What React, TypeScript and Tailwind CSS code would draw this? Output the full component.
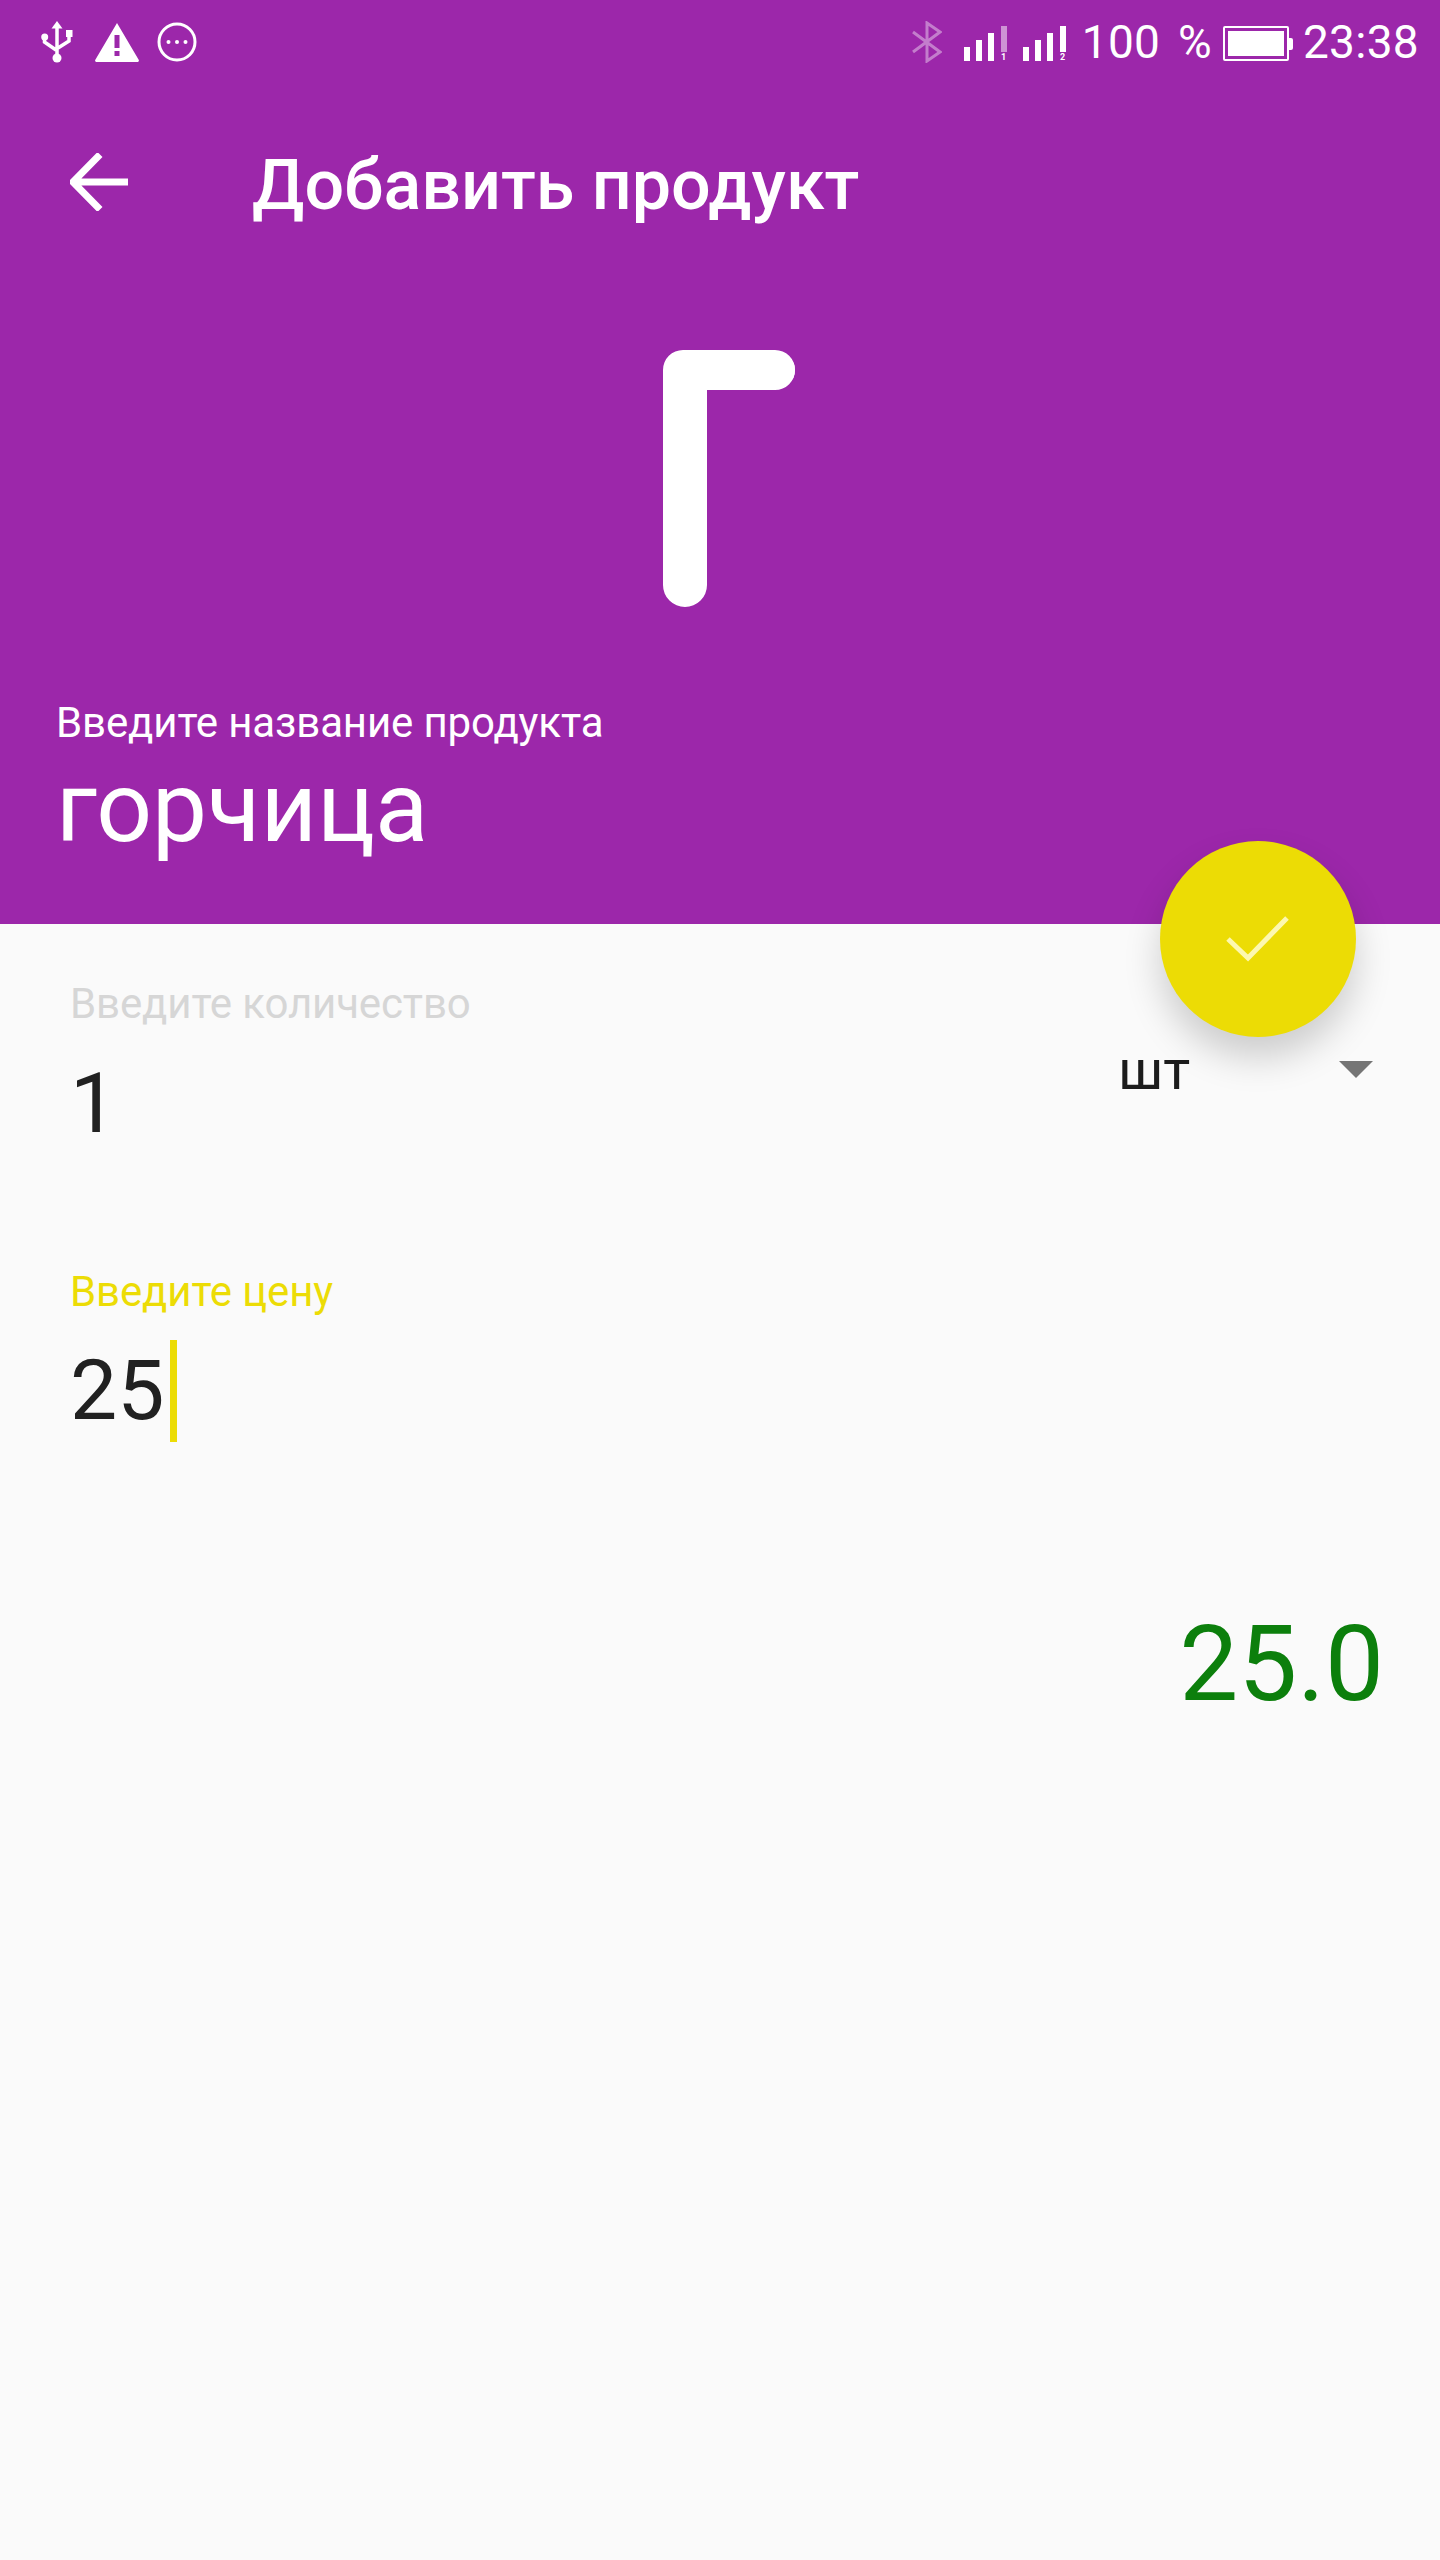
import React from 'react';

function UsbIcon() {
  return (
    <svg width="32" height="42" viewBox="0 0 32 42" fill="white">
      <path d="M16 0l5.500 7.500h-11z" />
      <path d="M16 6v31M3.500 16v5L15 29M28 14v6l-11 7" fill="none" stroke="white" strokeWidth="3.500" />
      <circle cx="16" cy="37" r="4.500" />
      <circle cx="3.700" cy="16" r="3.500" />
      <rect x="25" y="9" width="6.500" height="7" />
    </svg>
  );
}

function WarnIcon() {
  return (
    <svg width="44" height="39" viewBox="0 0 44 39">
      <path d="M22 0L43.500 36.500a1.500 1.500 0 0 1-1.300 2.500H1.800a1.500 1.500 0 0 1-1.300-2.500z" fill="white" />
      <rect x="19.500" y="12" width="5" height="13" fill="#9c27aa" />
      <rect x="19.500" y="28" width="5" height="5" fill="#9c27aa" />
    </svg>
  );
}

function MoreIcon() {
  return (
    <svg width="40" height="40" viewBox="0 0 40 40">
      <circle cx="20" cy="20" r="18" fill="none" stroke="white" strokeWidth="3" />
      <circle cx="11.500" cy="20" r="2" fill="white" />
      <circle cx="20" cy="20" r="2" fill="white" />
      <circle cx="28.500" cy="20" r="2" fill="white" />
    </svg>
  );
}

function BluetoothIcon() {
  return (
    <svg width="30" height="42" viewBox="0 0 30 42" fill="none" stroke="white" strokeOpacity="0.4" strokeWidth="3">
      <path d="M1 11l27 20-13 9V2l13 9L1 31" />
    </svg>
  );
}

// sim signal bars, the tall bar is dimmed when that sim has no data
function SignalIcon({ sim, dim }: { sim: string; dim?: boolean }) {
  return (
    <div className="relative flex h-[35px] w-[43px] items-end gap-[6px]">
      <div className="h-[14px] w-[6px] bg-white" />
      <div className="h-[21px] w-[6px] bg-white" />
      <div className="h-[28px] w-[6px] bg-white" />
      <div className={`absolute right-0 top-0 h-[26px] w-[6px] ${dim ? 'bg-white/50' : 'bg-white'}`} />
      <span className="absolute bottom-[-1px] right-0 w-[6px] text-center text-[9px] leading-[9px] font-bold text-white">{sim}</span>
    </div>
  );
}

function BatteryIcon() {
  return (
    <div className="flex items-center">
      <div className="h-[35px] w-[66px] rounded-[2px] border-[2px] border-white p-[3px]">
        <div className="h-full w-full bg-white" />
      </div>
      <div className="h-[12px] w-[4px] rounded-r-[2px] bg-white" />
    </div>
  );
}

function StatusBar() {
  return (
    <div className="flex h-[84px] items-start pl-[41px] pr-[21px] pt-[21px]">
      <UsbIcon />
      <div className="ml-[22px] mt-[2px]"><WarnIcon /></div>
      <div className="ml-[18px] mt-[1px]"><MoreIcon /></div>
      <div className="ml-auto flex items-center text-[46px] leading-[42px] font-normal tracking-[0.3px] text-white">
        <BluetoothIcon />
        <div className="ml-[22px] mt-[3px]"><SignalIcon sim="1" dim /></div>
        <div className="ml-[16px] mt-[3px]"><SignalIcon sim="2" /></div>
        <span className="ml-[16px] [word-spacing:6px]">100 %</span>
        <div className="ml-[11px] mt-[3px]"><BatteryIcon /></div>
        <span className="ml-[10px]">23:38</span>
      </div>
    </div>
  );
}

// first letter of the product, rounded ends come from the clip
function Monogram() {
  return (
    <svg width="240" height="418" viewBox="0 0 240 418" className="mt-[43px]">
      <defs>
        <clipPath id="letter-clip">
          <rect x="63" y="73" width="132" height="40" rx="20" />
          <rect x="63" y="73" width="44" height="257" rx="22" />
        </clipPath>
      </defs>
      <text x="45" y="320" fill="white" stroke="white" strokeWidth="28" strokeLinejoin="round" fontFamily="Roboto" fontWeight="300" fontSize="330" clipPath="url(#letter-clip)">Г</text>
    </svg>
  );
}

export default function App() {
  return (
    <div className="relative h-[2560px] w-[1440px] bg-[#fafafa] font-['Roboto',sans-serif]">
      <div className="h-[924px] bg-[#9c27aa]">
        <StatusBar />
        <div className="flex h-[150px] items-center pl-[70px] pt-[52px]">
          <svg width="58" height="58" viewBox="0 0 58 58" fill="none" stroke="white" strokeWidth="7" className="mt-[-6px]">
            <path d="M58 29H4M30 1.500L3 29l27 27.500" />
          </svg>
          <h1 className="ml-[124px] text-[70px] leading-[98px] font-medium text-white">Добавить продукт</h1>
        </div>
        <div className="flex h-[461px] items-start justify-center">
          <Monogram />
        </div>
        <div className="pl-[56px]">
          <p className="text-[42px] leading-[56px] tracking-[-0.13px] text-white">Введите название продукта</p>
          <p className="mt-[2px] text-[98px] leading-[110px] text-white">горчица</p>
        </div>
      </div>

      <div className="px-[70px] pt-[52px]">
        <div className="flex items-start">
          <div className="flex-1">
            <p className="text-[42px] leading-[56px] tracking-[-0.13px] text-[#d6d6d6]">Введите количество</p>
            <p className="mt-[20px] text-[84px] leading-[104px] text-[#212121]">1</p>
          </div>
          <div className="mr-[-3px] mt-[61px] flex w-[255px] items-center justify-between">
            <span className="mt-[1px] text-[56px] leading-[64px] text-[#1c1c1c]">шт</span>
            <div className="h-0 w-0 border-x-[17px] border-t-[17px] border-x-transparent border-t-[#757575]" />
          </div>
        </div>
        <div className="mt-[108px]">
          <p className="text-[42px] leading-[56px] tracking-[-0.13px] text-[#ecdc05]">Введите цену</p>
          <div className="mt-[19px] flex items-center">
            <span className="text-[84px] leading-[104px] text-[#212121]">25</span>
            <div className="ml-[6px] h-[102px] w-[7px] bg-[#ecdc05]" />
          </div>
        </div>
        <p className="mr-[-14px] mt-[162px] text-right text-[105px] leading-[120px] text-[#0c7f0c]">25.0</p>
      </div>

      <div className="absolute left-[1160px] top-[841px] flex h-[196px] w-[196px] items-center justify-center rounded-full bg-[#ecdc05] shadow-[0_21px_36px_rgba(0,0,0,0.18)]">
        <svg width="64" height="48" viewBox="0 0 64 48" fill="none" stroke="#fdf8b0" strokeWidth="5">
          <path d="M2 24l20 19L61 3" />
        </svg>
      </div>
    </div>
  );
}
